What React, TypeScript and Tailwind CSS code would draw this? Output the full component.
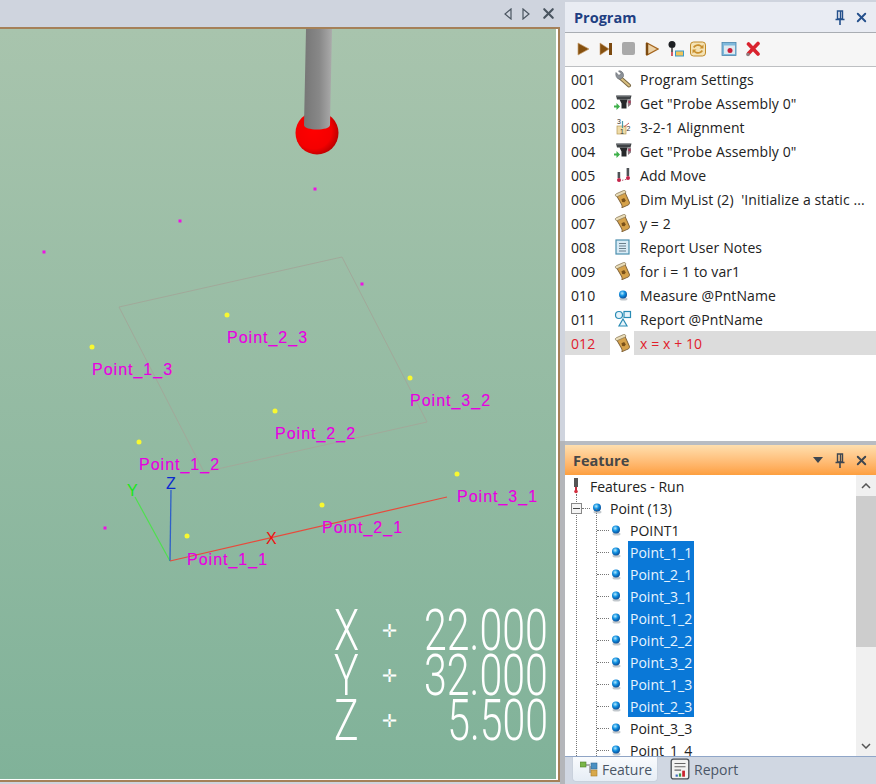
import { X } from "lucide-react";

const UI_FONT = "font-['Open_Sans','Noto_Sans',sans-serif]";

function Wrench() {
  return (
    <svg viewBox="0 0 18 18" className="size-[18px]">
      <path d="M6 7.500 15 15.500" stroke="#7b6a45" strokeWidth="4" strokeLinecap="round" />
      <path d="M6 7.500 15 15.500" stroke="#d8bf80" strokeWidth="2" strokeLinecap="round" />
      <path d="M2 2.500 5 5.500 7 3.500 4.500 1C7 .3 10 2.500 9.500 6.500L7 9C4 10 1 7 2 2.500Z" fill="#8d9298" stroke="#5f656b" strokeWidth=".6" />
    </svg>
  );
}

function Probe() {
  return (
    <svg viewBox="0 0 20 18" className="h-[18px] w-5">
      <path d="M3 1.500h15.500l-1 4H4Z" fill="#3f4346" />
      <path d="M4 2h13" stroke="#8b8f92" strokeWidth="1" />
      <path d="M6.500 5.500h8l-1 4v5H8.500v-5Z" fill="#26282a" />
      <path d="M14.500 6l3.500-.5v5L15 13Z" fill="#8d7a80" />
      <circle cx="16.500" cy="8" r="1.200" fill="#b8345a" />
      <path d="M1 11.500h2.500V9L7 12.500 3.500 16v-2.500H1Z" fill="#3eb04a" />
    </svg>
  );
}

function Align() {
  return (
    <svg viewBox="0 0 18 18" className="size-[18px]">
      <rect x="3" y="8" width="9" height="8" fill="#efdca8" stroke="#b89a58" strokeWidth=".7" />
      <text x="3" y="6" fontSize="7" fill="#333" fontFamily="Liberation Sans">3</text>
      <text x="6" y="15.500" fontSize="7" fill="#333" fontFamily="Liberation Sans">1</text>
      <text x="12.500" y="13" fontSize="7" fill="#333" fontFamily="Liberation Sans">2</text>
      <path d="M8.500 3v7" stroke="#4e9aa8" strokeWidth="1.200" />
      <path d="M10 9l5-4" stroke="#c55a5a" strokeWidth="1" />
    </svg>
  );
}

function Move() {
  return (
    <svg viewBox="0 0 18 18" className="size-[18px]">
      <path d="M5 15 14 13" stroke="#b85a70" strokeWidth="1" strokeDasharray="1.500 1.500" />
      <rect x="3.600" y="6" width="2.600" height="6" fill="#4e5256" />
      <rect x="12.600" y="2" width="2.600" height="8" fill="#4e5256" />
      <circle cx="5" cy="14" r="2" fill="#c4244a" />
      <circle cx="14" cy="12" r="2" fill="#c4244a" />
    </svg>
  );
}

function Scroll() {
  return (
    <svg viewBox="0 0 18 18" className="size-[18px]">
      <g transform="rotate(-24 9 9)">
        <path d="M4.500 3h9v11c0 1.500-1 2.500-2.500 2.500H4.500c1-1 1-2 1-3Z" fill="#d6a24a" stroke="#806238" strokeWidth=".9" />
        <rect x="3.500" y="1.500" width="11" height="3" rx="1.500" fill="#e9dcb8" stroke="#8b7a58" strokeWidth=".7" />
        <path d="M7.500 8.500h3l.5 3-2 1-2-1Z" fill="#7a5118" />
      </g>
    </svg>
  );
}

function Notes() {
  return (
    <svg viewBox="0 0 18 18" className="size-[18px]">
      <rect x="2" y="2" width="13" height="14" fill="#d8ebf6" stroke="#4c8fae" strokeWidth="1.200" />
      <path d="M5 5.500h7M5 8h7M5 10.500h7M5 13h7" stroke="#6b7f8c" strokeWidth="1" />
    </svg>
  );
}

function Ball() {
  return (
    <svg viewBox="0 0 12 12" className="size-3">
      <defs>
        <radialGradient id="ball" cx="40%" cy="35%" r="65%">
          <stop offset="0%" stopColor="#b5ecff" />
          <stop offset="50%" stopColor="#0f8fe0" />
          <stop offset="100%" stopColor="#0a4f9a" />
        </radialGradient>
      </defs>
      <ellipse cx="6.500" cy="10" rx="4" ry="1.500" fill="#9aa4ac" opacity=".6" />
      <circle cx="6" cy="5.500" r="4" fill="url(#ball)" />
    </svg>
  );
}

function ReportShapes() {
  return (
    <svg viewBox="0 0 18 18" className="size-[18px]">
      <circle cx="5" cy="5" r="3.500" fill="#e7f4fb" stroke="#2a8cb5" strokeWidth="1.200" />
      <rect x="10" y="1.500" width="6.500" height="6" fill="#e7f4fb" stroke="#2a8cb5" strokeWidth="1.200" />
      <path d="M9 9 13 16H5Z" fill="#e7f4fb" stroke="#2a8cb5" strokeWidth="1.200" />
    </svg>
  );
}

function ToolPlay() {
  return (
    <svg viewBox="0 0 14 14" className="size-[14px]">
      <path d="M2 1 13 7 2 13Z" fill="#85500f" stroke="#c9a070" strokeWidth=".7" />
    </svg>
  );
}

function ToolNext() {
  return (
    <svg viewBox="0 0 14 14" className="size-[14px]">
      <path d="M1 1 10 7 1 13Z" fill="#85500f" stroke="#c9a070" strokeWidth=".6" />
      <rect x="10" y="1" width="3" height="12" fill="#7c4a10" />
    </svg>
  );
}

function ToolStep() {
  return (
    <svg viewBox="0 0 14 14" className="size-[14px]">
      <path d="M2 1 13 7 2 13Z" fill="#ecd2a6" stroke="#a5651e" strokeWidth="1.300" />
      <path d="M2 1v12" stroke="#7c4a10" strokeWidth="2.500" />
    </svg>
  );
}

function ToolPoint() {
  return (
    <svg viewBox="0 0 18 18" className="size-[18px]">
      <circle cx="5" cy="4.500" r="3.500" fill="#1d1f22" />
      <path d="M5 8v4" stroke="#333" strokeWidth="1.500" />
      <path d="M5 12v4" stroke="#c52c3c" strokeWidth="1.500" />
      <rect x="8.500" y="11" width="8" height="5" fill="#f0c45a" stroke="#3a9ac8" strokeWidth="1" />
    </svg>
  );
}

function ToolRefresh() {
  return (
    <svg viewBox="0 0 18 18" className="size-[18px]">
      <rect x="1.500" y="2" width="15" height="14" rx="3" fill="#f4e2b4" stroke="#c08a2a" strokeWidth="1" />
      <path d="M4 7c2-3.500 7-3.500 9-1l1.500-1.500v4h-4L12 7C10 5.500 7 5.500 5.500 8Z" fill="#c98f2e" />
      <path d="M14 11c-2 3.500-7 3.500-9 1l-1.500 1.500v-4h4L6 11c2 1.500 5 1.500 6.500-1Z" fill="#c98f2e" />
    </svg>
  );
}

function ToolCapture() {
  return (
    <svg viewBox="0 0 16 16" className="size-4">
      <rect x="1" y="1.500" width="14" height="13" fill="#7fb9dc" stroke="#4a86ad" strokeWidth=".8" />
      <rect x="3" y="4.500" width="11" height="8.500" fill="#dfe9ef" />
      <circle cx="9" cy="9.500" r="2.500" fill="#c91f3a" />
    </svg>
  );
}

function ToolDelete() {
  return (
    <svg viewBox="0 0 16 16" className="size-4">
      <path d="M3.500 3 13 13M13 2.500 3.500 12.500" stroke="#d9232e" strokeWidth="3.600" strokeLinecap="round" />
      <circle cx="3" cy="13.500" r="1.800" fill="#8f7f82" />
    </svg>
  );
}

function PinIcon() {
  return (
    <svg viewBox="0 0 10 15" className="h-[15px] w-[10px]">
      <path d="M2.500 1h5v8h-5ZM5.500 1v8" fill="none" stroke="currentColor" strokeWidth="1.400" />
      <path d="M.5 9.500h9M5 9.500V15" fill="none" stroke="currentColor" strokeWidth="1.600" />
    </svg>
  );
}

function PanelButtons({ menu, tone }: { menu?: boolean; tone: string }) {
  return (
    <div className={`flex items-center gap-[9px] ${tone}`}>
      {menu && (
        <svg viewBox="0 0 10 6" className="mr-[3px] h-[6px] w-[10px]">
          <path d="M0 0h10L5 6Z" fill="currentColor" />
        </svg>
      )}
      <PinIcon />
      <X className="size-[15px]" strokeWidth={3} />
    </div>
  );
}

const PROGRAM = [
  { n: "001", icon: <Wrench />, text: "Program Settings" },
  { n: "002", icon: <Probe />, text: 'Get "Probe Assembly 0"' },
  { n: "003", icon: <Align />, text: "3-2-1 Alignment" },
  { n: "004", icon: <Probe />, text: 'Get "Probe Assembly 0"' },
  { n: "005", icon: <Move />, text: "Add Move" },
  { n: "006", icon: <Scroll />, text: "Dim MyList (2)  'Initialize a static ..." },
  { n: "007", icon: <Scroll />, text: "y = 2" },
  { n: "008", icon: <Notes />, text: "Report User Notes" },
  { n: "009", icon: <Scroll />, text: "for i = 1 to var1" },
  { n: "010", icon: <Ball />, text: "Measure @PntName" },
  { n: "011", icon: <ReportShapes />, text: "Report @PntName" },
];

const POINTS = ["POINT1", "Point_1_1", "Point_2_1", "Point_3_1", "Point_1_2", "Point_2_2", "Point_3_2", "Point_1_3", "Point_2_3", "Point_3_3", "Point_1_4"];
const SELECTED = POINTS.slice(1, 9);

const LABELS = [
  { t: "Point_1_3", x: 92, y: 375, dot: [92, 347] },
  { t: "Point_2_3", x: 227, y: 343, dot: [227, 315] },
  { t: "Point_3_2", x: 410, y: 406, dot: [410, 378] },
  { t: "Point_2_2", x: 275, y: 439, dot: [275, 411] },
  { t: "Point_1_2", x: 139, y: 470, dot: [139, 442] },
  { t: "Point_1_1", x: 187, y: 565, dot: [187, 536] },
  { t: "Point_2_1", x: 322, y: 533, dot: [322, 505] },
  { t: "Point_3_1", x: 457, y: 502, dot: [457, 474] },
];

const MARKS = [
  [315, 189],
  [180, 221],
  [44, 252],
  [362, 284],
  [105, 528],
];

const READOUT = [
  { axis: "X", value: "22.000" },
  { axis: "Y", value: "32.000" },
  { axis: "Z", value: "5.500" },
];

function Scene() {
  return (
    <svg viewBox="0 29 556 750" className="absolute inset-0 h-full w-full">
      <defs>
        <linearGradient id="shaft" x1="0" x2="1" y1="0" y2="0">
          <stop offset="0%" stopColor="#767676" />
          <stop offset="55%" stopColor="#888888" />
          <stop offset="100%" stopColor="#ababab" />
        </linearGradient>
        <radialGradient id="tip" cx="42%" cy="45%" r="60%">
          <stop offset="0%" stopColor="#ff0000" />
          <stop offset="70%" stopColor="#f40000" />
          <stop offset="100%" stopColor="#b80000" />
        </radialGradient>
      </defs>
      <path d="M119 307 342 257 427 422 204 472Z" fill="none" stroke="#a1a99a" strokeWidth="1" />
      <circle cx="317" cy="133" r="21.500" fill="url(#tip)" />
      <path d="M306 29h26l-2 96c0 6-26 6-26 0Z" fill="url(#shaft)" />
      {MARKS.map(([x, y]) => (
        <rect key={x} x={x - 1.500} y={y - 1.500} width="3" height="3" fill="#ee10e4" />
      ))}
      {LABELS.map((l) => (
        <circle key={l.t} cx={l.dot[0]} cy={l.dot[1]} r="2.500" fill="#f8f830" />
      ))}
      <path d="M170 561 135 497" stroke="#4fe04f" strokeWidth="1.200" />
      <path d="M170 561 171 490" stroke="#2f5fc8" strokeWidth="1.300" />
      <path d="M170 561 447 497" stroke="#e84a3c" strokeWidth="1.200" />
      <g fontFamily="Liberation Sans" fontSize="16">
        <text x="127" y="496" fill="#19e619">Y</text>
        <text x="166" y="489" fill="#0a2ad0">Z</text>
        <text x="266" y="544" fill="#f01010">X</text>
        {LABELS.map((l) => (
          <text key={l.t} x={l.x} y={l.y} fill="#e600e0" stroke="#e600e0" strokeWidth=".2" letterSpacing="1">
            {l.t}
          </text>
        ))}
      </g>
    </svg>
  );
}

function Readout() {
  return (
    <div className="absolute top-[579px] right-[8px] flex w-[214px] flex-col font-['Roboto',sans-serif] text-white">
      {READOUT.map((r) => (
        <div key={r.axis} className="flex h-[45px] items-center">
          <span className="w-[22px] origin-left scale-x-[.72] text-[57px] leading-[45px] font-light">{r.axis}</span>
          <span className="ml-[26px] font-['DejaVu_Sans',sans-serif] text-[18px] leading-none">✛</span>
          <div className="ml-auto flex w-[124px] justify-end">
            <span className="shrink-0 origin-right scale-x-[.72] text-[57px] leading-[45px] font-light">{r.value}</span>
          </div>
        </div>
      ))}
    </div>
  );
}

function ProgramPanel() {
  return (
    <section className="flex h-[441px] flex-col border-l-[5px] border-[#cfd4de] bg-white">
      <div className="h-[2px] bg-[#cfd4de]" />
      <header className="flex h-[31px] items-center justify-between border-b border-[#a9adb3] bg-[#e9ecf3] pr-[7px] pl-[9px]">
        <span className="pt-[1px] text-[14.500px] font-bold text-[#1f3f82]">Program</span>
        <PanelButtons tone="text-[#24508c]" />
      </header>
      <div className="flex h-[34px] items-center border-b border-[#bdbfc2] bg-[#f6f6f6] pb-[2px] pl-[11px]">
        <span className="flex w-[23px]"><ToolPlay /></span>
        <span className="flex w-[23px]"><ToolNext /></span>
        <span className="flex w-[23px]"><span className="size-[13px] rounded-[2px] bg-[#a9a9a9]" /></span>
        <span className="flex w-[22px]"><ToolStep /></span>
        <span className="flex w-[22px]"><ToolPoint /></span>
        <span className="flex w-[32px]"><ToolRefresh /></span>
        <span className="flex w-[24px]"><ToolCapture /></span>
        <ToolDelete />
      </div>
      <div className="flex flex-1 flex-col text-[14px] tracking-[.1px] text-[#222]">
        {PROGRAM.map((row) => (
          <div key={row.n} className="flex h-6 items-center">
            <span className="w-[45px] pl-[6px]">{row.n}</span>
            <span className="flex w-[26px] justify-center">{row.icon}</span>
            <span className="whitespace-pre pl-[4px]">{row.text}</span>
          </div>
        ))}
        <div className="flex h-6 items-center text-[#e0202c]">
          <span className="flex h-full w-[45px] items-center bg-[#dcdcdc] pl-[6px]">012</span>
          <span className="flex w-[24px] justify-center pl-[2px]"><Scroll /></span>
          <span className="flex h-full flex-1 items-center bg-[#dcdcdc] pl-[6px]">x = x + 10</span>
        </div>
      </div>
    </section>
  );
}

function TreeRow({ label }: { label: string }) {
  const selected = SELECTED.includes(label);
  return (
    <div className="flex h-[22px] items-center pl-[32px]">
      <span className="w-[12px] border-t border-dotted border-[#777]" />
      <span className="flex w-[14px] justify-center"><Ball /></span>
      <span className={selected ? "ml-[5px] flex h-full w-[66px] items-center bg-[#0a78d7] pl-[2px] text-[#e6f4ff]" : "ml-[5px] pl-[2px] text-[#222]"}>
        {label}
      </span>
    </div>
  );
}

function FeaturePanel() {
  return (
    <section className="flex min-h-0 flex-1 flex-col border-l-[5px] border-[#b4b6ba]">
      <header className="flex h-[30px] items-center justify-between bg-linear-to-b from-[#ffdfae] to-[#fd9f3e] pr-[7px] pl-[8px]">
        <span className="pt-[1px] text-[14.500px] font-bold text-[#474747]">Feature</span>
        <PanelButtons menu tone="text-[#3d4650]" />
      </header>
      <div className="flex min-h-0 flex-1 border-b border-[#90a6c8] bg-white">
        <div className="relative flex-1 overflow-hidden text-[14px]">
          <div className="absolute top-[19px] bottom-0 left-[11px] border-l border-dotted border-[#777]" />
          <div className="absolute top-[34px] bottom-0 left-[31px] border-l border-dotted border-[#777]" />
          <div className="flex h-[22px] items-center pl-[6px] text-[#222]">
            <svg viewBox="0 0 10 16" className="relative mr-[9px] h-4 w-[10px]">
              <rect x="3" y="0" width="4" height="9" fill="#555" />
              <path d="M5 9v4" stroke="#c52c3c" strokeWidth="2" />
              <circle cx="5" cy="13.500" r="1.800" fill="#d32f3f" />
            </svg>
            Features - Run
          </div>
          <div className="flex h-[22px] items-center pl-[6px] text-[#222]">
            <span className="relative flex size-[11px] items-center justify-center border border-[#888] bg-[#f4f4f4]">
              <span className="h-px w-[7px] bg-[#444]" />
            </span>
            <span className="w-[8px] border-t border-dotted border-[#777]" />
            <span className="flex w-[14px] justify-center"><Ball /></span>
            <span className="pl-[6px]">Point (13)</span>
          </div>
          {POINTS.map((p) => (
            <TreeRow key={p} label={p} />
          ))}
        </div>
        <div className="flex w-[20px] flex-col bg-[#f0f0f0]">
          <div className="flex h-[21px] items-center justify-center text-[#555]">
            <svg viewBox="0 0 10 6" className="h-[6px] w-[10px]"><path d="M1 5 5 1l4 4" fill="none" stroke="currentColor" strokeWidth="1.500" /></svg>
          </div>
          <div className="h-[151px] bg-[#cdcdcd]" />
          <div className="flex-1" />
          <div className="flex h-[21px] items-center justify-center text-[#555]">
            <svg viewBox="0 0 10 6" className="h-[6px] w-[10px]"><path d="M1 1 5 5l4-4" fill="none" stroke="currentColor" strokeWidth="1.500" /></svg>
          </div>
        </div>
      </div>
      <div className="flex h-[27px] items-start bg-[#d0d7e2] pl-[8px] text-[14px] text-[#4a5666]">
        <div className="flex h-[24px] w-[84px] items-center gap-[4px] rounded-b-[3px] bg-linear-to-b from-[#f9fbfd] to-[#e6edf5] pl-[7px] shadow-[0_0_1px_#8a9ab0]">
          <svg viewBox="0 0 18 16" className="h-4 w-[18px]">
            <rect x="0" y="1" width="6" height="5" fill="#7ab648" stroke="#4f7f2a" strokeWidth=".6" />
            <rect x="11" y="2" width="6" height="6" fill="#4a90c2" stroke="#2e6a96" strokeWidth=".6" />
            <rect x="11" y="9" width="6" height="6" fill="#d8a84a" stroke="#a87c28" strokeWidth=".6" />
            <path d="M6 4h4M10 5v7" stroke="#666" strokeWidth="1" />
          </svg>
          Feature
        </div>
        <div className="ml-[12px] flex h-[24px] items-center gap-[3px]">
          <svg viewBox="0 0 20 20" className="size-[22px]">
            <rect x="2" y="1" width="16" height="18" rx="2" fill="#f2f2f2" stroke="#4a4f55" strokeWidth="1.200" />
            <path d="M5 5h10M5 8h10M5 11h6" stroke="#666" strokeWidth="1" />
            <rect x="9" y="14" width="2" height="3" fill="#3a9a4a" />
            <rect x="12" y="11.500" width="2.500" height="5.500" fill="#c9242e" />
            <rect x="6" y="15" width="2" height="2" fill="#3a6ac0" />
          </svg>
          Report
        </div>
      </div>
    </section>
  );
}

export default function App() {
  return (
    <div className={`flex h-[784px] w-[876px] overflow-hidden bg-[#cfd4de] ${UI_FONT}`}>
      <div className="flex w-[560px] flex-col">
        <div className="flex h-[27px] items-center justify-end gap-[10px] pr-[3px] text-[#4a5560]">
          <svg viewBox="0 0 8 12" className="h-3 w-2"><path d="M7 1 1 6l6 5Z" fill="none" stroke="currentColor" strokeWidth="1.200" /></svg>
          <svg viewBox="0 0 8 12" className="h-3 w-2"><path d="M1 1l6 5-6 5Z" fill="none" stroke="currentColor" strokeWidth="1.200" /></svg>
          <X className="size-[17px]" strokeWidth={3} />
        </div>
        <div className="mb-[2px] flex-1 border-t-2 border-r-2 border-b-2 border-[#a58058]">
          <div className="relative h-full border-r-2 border-b border-white bg-linear-to-b from-[#a8c4ad] to-[#80b299]">
            <Scene />
            <Readout />
          </div>
        </div>
      </div>
      <div className="flex w-[316px] flex-col">
        <ProgramPanel />
        <div className="h-[4px] border-l-[5px] border-[#b4b6ba] bg-[#b8bcc2]" />
        <FeaturePanel />
      </div>
    </div>
  );
}
